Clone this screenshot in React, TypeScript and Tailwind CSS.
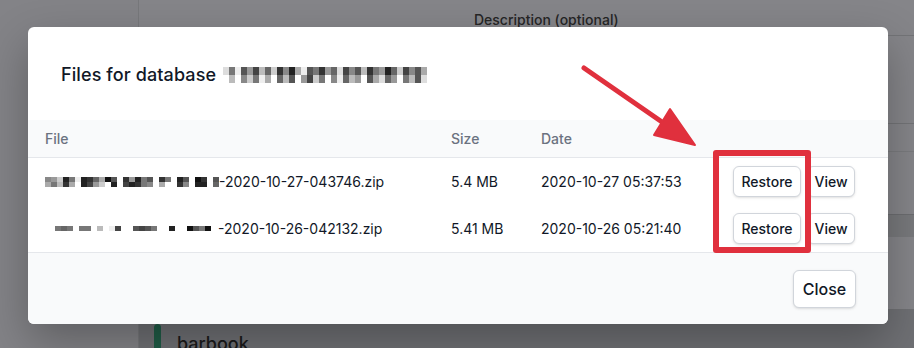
import React from 'react';

const FONT = { fontFamily: 'Inter, "Noto Sans", "Liberation Sans", sans-serif' };

// pixel blocks of the blurred-out names (shade, row)
const titleMosaic = [
  ['#ddd', '#777', '#eee', '#555', '#999', '#444', '#bbb', '#666', '#ccc', '#333', '#888', '#222', '#aaa', '#eee', '#555', '#777', '#333', '#999', '#666', '#ddd', '#444', '#888', '#555', '#bbb', '#333', '#777', '#999', '#222', '#666', '#ccc', '#444', '#888', '#555', '#aaa'],
  ['#fff', '#bbb', '#fff', '#888', '#ccc', '#777', '#eee', '#aaa', '#fff', '#666', '#bbb', '#555', '#fff', '#999', '#444', '#ccc', '#777', '#fff', '#888', '#eee', '#666', '#bbb', '#999', '#fff', '#555', '#aaa', '#ddd', '#666', '#999', '#fff', '#777', '#bbb', '#555', '#ddd'],
];

const row1Mosaic = [
  ['#888', '#999', '#ccc', '#222', '#777', '#eee', '#222', '#333', '#666', '#aaa', '#111', '#555', '#fff', '#333', '#999', '#222', '#777', '#555', '#fff', '#333', '#777', '#fff', '#222', '#555', '#fff', '#111', '#333', '#fff', '#555'],
  ['#aaa', '#777', '#bbb', '#333', '#aaa', '#fff', '#222', '#444', '#999', '#ccc', '#fff', '#222', '#fff', '#444', '#222', '#333', '#777', '#888', '#fff', '#aaa', '#fff', '#fff', '#333', '#888', '#fff', '#222', '#222', '#fff', '#666'],
];

const row2Mosaic = [
  '#fff', '#777', '#666', '#777', '#fff', '#777', '#777', '#fff', '#bbb', '#fff', '#eee', '#444', '#fff', '#fff', '#555', '#444', '#555', '#777', '#fff', '#fff', '#222', '#fff', '#fff', '#111', '#555', '#777', '#111',
];

function Mosaic({ rows, h }: { rows: string[][]; h: string }) {
  return (
    <span className="inline-flex flex-col align-middle">
      {rows.map((r, i) => (
        <span key={i} className="flex">
          {r.map((c, j) => (
            <span key={j} className={`block w-[6px] ${h}`} style={{ backgroundColor: c }} />
          ))}
        </span>
      ))}
    </span>
  );
}

function SmallButton({ label, w }: { label: string; w: string }) {
  return (
    <button className={`${w} h-[31px] rounded-md border border-[#d1d5db] bg-white text-sm font-medium text-[#111827] shadow-sm`}>
      {label}
    </button>
  );
}

const files = [
  { tail: '-2020-10-27-043746.zip', size: '5.4 MB', date: '2020-10-27 05:37:53', mosaic: row1Mosaic },
  { tail: '-2020-10-26-042132.zip', size: '5.41 MB', date: '2020-10-26 05:21:40', mosaic: null },
];

export default function App() {
  return (
    <div className="relative w-[914px] h-[348px] overflow-hidden bg-[#858589]" style={FONT}>
      {/* page behind the dialog */}
      <div className="flex h-full">
        <div className="w-[139px] border-r border-[#77787b] bg-[#838387]" />
        <div className="flex-1 flex flex-col overflow-hidden">
          <div className="shrink-0 pl-[335px] pt-[10px] text-sm font-medium text-[#262626]">Description (optional)</div>
          <div className="shrink-0 mt-[5px] border-b border-[#737477]" />
          <div className="shrink-0 h-[88px] border-b border-[#737477]" />
          <div className="shrink-0 h-[28px] border-b border-[#7a7b7e]" />
          <div className="shrink-0 h-[63px] border-b border-[#6c6d70]" />
          <div className="shrink-0 h-[22px] bg-[#78797c]" />
          <div className="shrink-0 h-[73px] border-b border-[#6f7073]" />
          <div className="shrink-0 h-[60px] flex items-start gap-[16px] pl-[15px] pt-[14px] bg-[#6f7074]">
            <div className="w-[7px] h-[30px] rounded-full bg-[#1f5c46]" />
            <div className="pt-[6px] text-lg font-medium text-[#1a1a1a]">barbook</div>
          </div>
        </div>
      </div>

      {/* dialog */}
      <div className="absolute inset-0 pl-[28px] pt-[27px]">
        <div className="w-[860px] h-[297px] overflow-hidden rounded-md bg-white shadow-[0_18px_45px_rgba(0,0,0,0.28)] flex flex-col">
          <div className="h-[93px] flex items-center pl-[33px] pt-[3px]">
            <h2 className="flex items-center gap-[7px] text-lg font-medium text-[#111827] tracking-[0.1px]">
              Files for database
              <Mosaic rows={titleMosaic} h="h-[8px]" />
            </h2>
          </div>

          <div className="h-[38px] flex items-center bg-[#f9fafb] border-b border-[#e5e7eb] text-sm font-medium text-[#6b7280]">
            <div className="w-[423px] pl-[17px]">File</div>
            <div className="w-[90px]">Size</div>
            <div>Date</div>
          </div>

          {files.map((f, i) => (
            <div key={i} className="h-[47px] flex items-center text-sm text-[#111827]">
              <div className="w-[423px] pl-[17px] flex items-center">
                {f.mosaic ? (
                  <Mosaic rows={f.mosaic} h="h-[5px]" />
                ) : (
                  <span className="flex items-start w-[173px] pl-[4px] pt-[4px]">
                    {row2Mosaic.map((c, j) => (
                      <span key={j} className={`block w-[6px] ${j === 9 || j === 22 ? 'h-[10px]' : 'h-[5px]'}`} style={{ backgroundColor: c }} />
                    ))}
                  </span>
                )}
                <span>{f.tail}</span>
              </div>
              <div className="w-[90px]">{f.size}</div>
              <div className="w-[192px]">{f.date}</div>
              <div className="flex gap-[6px]">
                <SmallButton label="Restore" w="w-[68px]" />
                <SmallButton label="View" w="w-[48px]" />
              </div>
            </div>
          ))}

          <div className="flex-1 flex justify-end items-start pt-[17px] pr-[32px] bg-[#f9fafb] border-t border-[#e5e7eb]">
            <button className="w-[63px] h-[38px] rounded-md border border-[#d1d5db] bg-white text-base font-medium text-[#111827] shadow-sm">
              Close
            </button>
          </div>
        </div>
      </div>

      {/* annotation: red arrow and box */}
      <div className="absolute left-[713px] top-[150px] w-[98px] h-[103px] rounded-[3px] border-[6px] border-[#e0303d]" />
      <svg className="absolute inset-0 pointer-events-none" width="914" height="348" viewBox="0 0 914 348">
        <line x1="584" y1="68" x2="662" y2="122" stroke="#e0303d" strokeWidth="5" strokeLinecap="round" />
        <polygon points="670,109 654,135 695,145" fill="#e0303d" stroke="#e0303d" strokeWidth="2" strokeLinejoin="round" />
      </svg>
    </div>
  );
}
